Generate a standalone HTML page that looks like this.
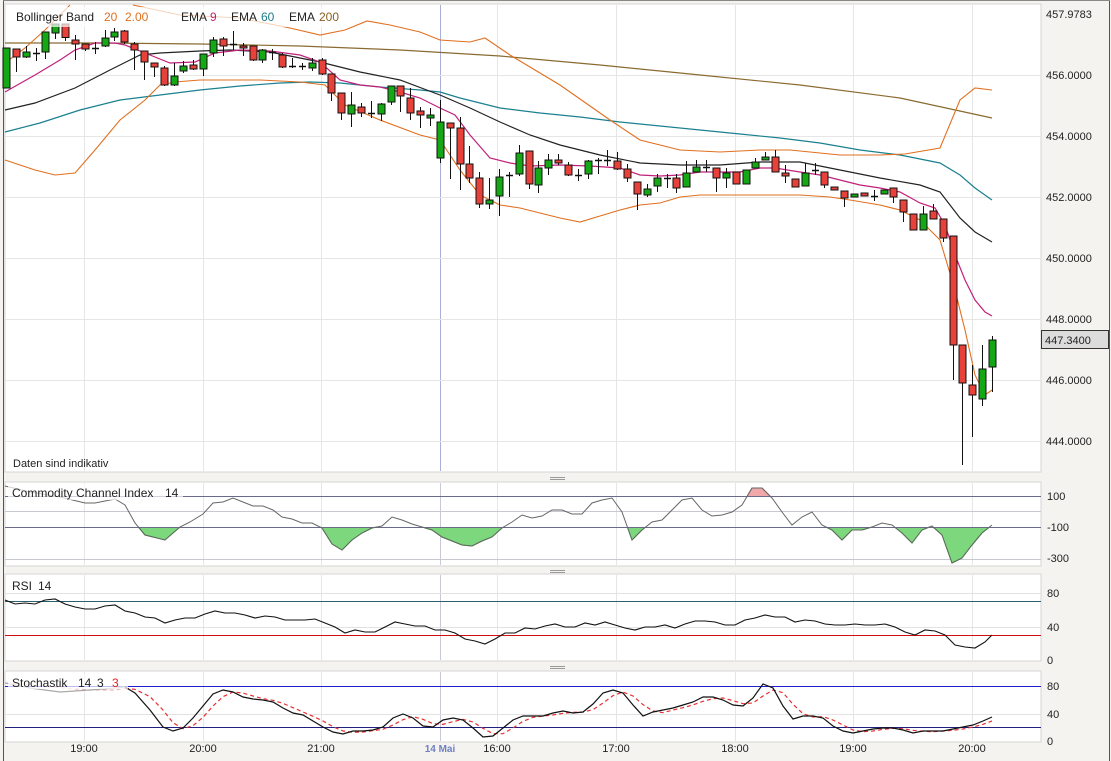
<!DOCTYPE html>
<html><head><meta charset="utf-8"><style>
html,body{margin:0;padding:0;background:#f4f3ef;width:1111px;height:761px;overflow:hidden}
svg{display:block;font-family:"Liberation Sans",Arial,sans-serif}
</style></head><body>
<svg id="s" width="1111" height="761" viewBox="0 0 1111 761" xmlns="http://www.w3.org/2000/svg">
<rect x="0" y="0" width="1111" height="761" fill="#f4f3ef"/>
<line x1="3.5" y1="0" x2="3.5" y2="761" stroke="#555" stroke-width="1"/>
<line x1="1109.5" y1="0" x2="1109.5" y2="761" stroke="#555" stroke-width="1"/>
<line x1="3" y1="0.5" x2="1110" y2="0.5" stroke="#888"/>
<rect x="5" y="4" width="1036" height="468" fill="#fff" stroke="#d6d6d6"/>
<rect x="5" y="482" width="1036" height="84" fill="#fff" stroke="#d6d6d6"/>
<rect x="5" y="574" width="1036" height="87" fill="#fff" stroke="#d6d6d6"/>
<rect x="5" y="671" width="1036" height="71" fill="#fff" stroke="#d6d6d6"/>
<g id="grid"></g>
<g id="main"></g>
<g id="ind"></g>
<g stroke="#999" stroke-width="1">
<line x1="550" y1="477.5" x2="565" y2="477.5"/><line x1="550" y1="479.5" x2="565" y2="479.5"/>
<line x1="550" y1="570.5" x2="565" y2="570.5"/><line x1="550" y1="572.5" x2="565" y2="572.5"/>
<line x1="550" y1="666.5" x2="565" y2="666.5"/><line x1="550" y1="668.5" x2="565" y2="668.5"/>
</g>
<rect x="8" y="7" width="335" height="20" fill="#fff" opacity="0.7"/>
<g font-size="12" fill="#222">
<text x="16" y="21">Bollinger Band</text>
<text x="104" y="21" fill="#e07020">20</text>
<text x="125" y="21" fill="#e07020">2.00</text>
<text x="181" y="21">EMA</text><text x="210" y="21" fill="#c0207a">9</text>
<text x="231" y="21">EMA</text><text x="261" y="21" fill="#1a7a8a">60</text>
<text x="289" y="21">EMA</text><text x="319" y="21" fill="#8a6020">200</text>
</g>
<text x="13" y="467" font-size="11" fill="#222">Daten sind indikativ</text>
<rect x="8" y="484" width="175" height="16" fill="#fff" opacity="0.7"/>
<g font-size="12" fill="#222">
<text x="12" y="497">Commodity Channel Index</text><text x="165" y="497">14</text>
<text x="12" y="590">RSI</text><text x="38" y="590">14</text>
</g>
<rect x="8" y="674" width="120" height="15" fill="#fff" opacity="0.7"/>
<g font-size="12" fill="#222">
<text x="12" y="687">Stochastik</text><text x="78" y="687">14</text><text x="97" y="687">3</text><text x="112" y="687" fill="#e82020">3</text>
</g>
<g font-size="11" fill="#222">
<text x="1046" y="18">457.9783</text>
<text x="1046" y="79">456.0000</text>
<text x="1046" y="140">454.0000</text>
<text x="1046" y="201">452.0000</text>
<text x="1046" y="262">450.0000</text>
<text x="1046" y="323">448.0000</text>
<text x="1046" y="384">446.0000</text>
<text x="1046" y="445">444.0000</text>
<text x="1047" y="500">100</text>
<text x="1047" y="531">-100</text>
<text x="1047" y="562">-300</text>
<text x="1047" y="597">80</text>
<text x="1047" y="631">40</text>
<text x="1047" y="664">0</text>
<text x="1047" y="690">80</text>
<text x="1047" y="718">40</text>
<text x="1047" y="745">0</text>
</g>
<rect x="1041.5" y="330.5" width="67" height="18" fill="#dcdcdc" stroke="#333"/>
<text x="1045" y="344" font-size="11" fill="#222">447.3400</text>
<g font-size="11" fill="#222" text-anchor="middle">
<text x="84" y="752">19:00</text><text x="203" y="752">20:00</text><text x="321" y="752">21:00</text>
<text x="440" y="752" fill="#7080c0" font-weight="bold" font-size="10">14 Mai</text>
<text x="497" y="752">16:00</text><text x="616" y="752">17:00</text><text x="735" y="752">18:00</text>
<text x="853" y="752">19:00</text><text x="972" y="752">20:00</text>
</g>
</svg>
<script>
var NS="http://www.w3.org/2000/svg";
function el(p,t,a){var e=document.createElementNS(NS,t);for(var k in a)e.setAttribute(k,a[k]);document.getElementById(p).appendChild(e);return e;}
function pl(p,pts,st,w,extra){var a={points:pts.map(function(q){return q.join(',')}).join(' '),fill:'none',stroke:st,'stroke-width':w||1};for(var k in extra)a[k]=extra[k];return el(p,'polyline',a);}
var vx=[84,203,321,497,616,735,853,972];
var panels=[[5,471],[483,565],[575,660],[672,741]];
panels.forEach(function(pp){vx.forEach(function(x){el('grid','line',{x1:x+.5,x2:x+.5,y1:pp[0],y2:pp[1],stroke:'#e6e6e6'})});
el('grid','line',{x1:440.5,x2:440.5,y1:pp[0],y2:pp[1],stroke:pp[0]==5?'#a8b0d8':'#c8c8d8'});});
[75,136,197,258,319,380,441].forEach(function(y){el('grid','line',{x1:5,x2:1041,y1:y+.5,y2:y+.5,stroke:'#e6e6e6'})});
[511,559].forEach(function(y){el('grid','line',{x1:5,x2:1041,y1:y+.5,y2:y+.5,stroke:'#c8c8d0'})});
[593,627].forEach(function(y){el('grid','line',{x1:5,x2:1041,y1:y+.5,y2:y+.5,stroke:'#e2e2e2'})});
[714].forEach(function(y){el('grid','line',{x1:5,x2:1041,y1:y+.5,y2:y+.5,stroke:'#e2e2e2'})});
pl('main',[[5,43],[100,43],[200,44],[300,46],[400,50],[500,56],[600,65],[700,75],[800,85],[900,98],[992,118]],'#8a6a30',1.2);
pl('main',[[5,132],[40,123],[80,110],[120,100],[160,95],[200,90],[240,86],[280,83],[310,82],[340,83],[380,87],[420,90],[440,92],[460,98],[500,108],[540,113],[580,117],[620,122],[660,126],[700,130],[740,134],[780,138],[820,143],[860,150],[900,155],[940,163],[960,175],[975,188],[992,200]],'#1a8090',1.2);
pl('main',[[5,110],[35,103],[75,88],[110,70],[140,55],[160,53],[200,51],[230,50],[270,52],[320,62],[360,72],[400,80],[440,95],[470,108],[500,122],[530,135],[560,145],[600,155],[640,163],[680,165],[720,165],[760,162],[800,162],[840,170],[880,178],[920,185],[940,192],[960,218],[975,232],[992,242]],'#222',1.2);
pl('main',[[5,63],[25,48],[45,30],[70,5]],'#e07020',1.1);
pl('main',[[133,5],[180,15],[240,18],[290,28],[320,35],[345,30],[367,21],[390,25],[420,32],[440,40],[470,42],[485,38],[510,55],[560,85],[610,120],[640,140],[680,150],[720,152],[760,150],[790,150],[840,155],[880,155],[905,154],[940,148],[960,100],[975,88],[992,90]],'#e07020',1.1);
pl('main',[[5,160],[35,170],[55,175],[75,173],[95,150],[120,120],[145,100],[160,85],[175,82],[200,80],[260,80],[300,82],[325,85],[345,105],[380,120],[420,135],[440,140],[460,170],[480,195],[500,205],[520,208],[560,218],[580,222],[600,216],[620,210],[640,205],[660,203],[680,197],[700,195],[740,195],[800,195],[830,197],[850,200],[880,205],[900,210],[920,220],[940,240],[955,290],[965,330],[975,375],[985,395],[992,390]],'#e07020',1.1);
pl('main',[[5,92],[35,75],[60,60],[75,50],[95,43],[115,43],[125,45],[150,55],[170,63],[195,62],[215,53],[240,50],[270,51],[300,55],[320,62],[340,80],[360,85],[380,87],[400,92],[420,98],[440,108],[455,115],[470,135],[490,158],[510,163],[530,166],[560,165],[590,166],[620,168],[640,175],[660,176],[680,175],[700,172],[740,172],[760,168],[775,168],[800,172],[820,175],[840,180],[860,185],[880,188],[900,192],[920,203],[935,208],[945,225],[955,255],[965,280],[975,300],[985,312],[992,316]],'#c0207a',1.2);
var C=[[88,48,48,88],[49,57,49,72],[57,52,46,58],[53,53,48,61],[52,32,32,59],[33,24,24,39],[24,37.5,24,41],[40,44,35,60],[44,49,44,51],[48,48,42,54],[46,38,30,47],[37,32,28,41],[31,42,30,44],[44,50,42,70],[51,62,51,80],[63,67,63,77],[68,85,66,86],[85,76,63,86],[71,66,61,73],[65,69,60,70],[69,54,54,76],[53,40,37,57],[39,46,37,56],[44,44,31,50],[46,48,43,56],[46,60,46,61],[60,50,49,63],[52,52,49,60],[55,67,53,68],[66,66,58,68],[66,66,63,70],[68,63,58,71],[60,74,58,75],[74,93,74,101],[93,113,93,120],[114,105,92,127],[107,113,103,117],[113,113,101,118],[114,104,103,121],[102,86,86,105],[86,96,86,112],[98,113,88,120],[111,115,107,128],[118,115,108,126],[158,122,100,163],[123,128,123,179],[128,164,117,190],[164,178,146,183],[178,204,172,208],[204,200,178,209],[196,177,169,216],[175,175,172,197],[174,153,145,176],[151,184,151,189],[185,168,161,193],[168,160,154,175],[160,163,154,165],[165,175,162,176],[175,175,169,181],[174,161,160,179],[160,160,158,174],[160,160,150,166],[161,169,152,170],[169,178,164,182],[182,194,182,210],[195,189,184,197],[186,178,174,192],[178,178,174,188],[178,188,174,193],[187,173,161,187],[172,167,160,172],[167,167,160,172],[168,178,168,192],[178,173,168,188],[172,184,172,184],[184,170,170,184],[168,162,158,168],[160,157,152,160],[157,172,150,172],[173,176,165,183],[179,187,179,187],[186,173,163,186],[170,170,163,175],[172,185,172,188],[187,190,187,190],[191,198,191,207],[197,194,194,197],[193,196,193,196],[196,196,190,201],[194,190,190,194],[188,197,188,203],[200,212,200,222],[214,230,214,230],[230,214,206,230],[211,219,204,219],[219,238,219,242],[236,345,236,380],[345,383,345,465],[385,395,365,437],[399,369,345,406],[367,340,336,392]];
C.forEach(function(c,i){var x=Math.round(6+i*9.86)+.5;
el('main','line',{x1:x,x2:x,y1:c[2],y2:c[3],stroke:'#111'});
if(Math.abs(c[0]-c[1])<1){el('main','line',{x1:x-3.5,x2:x+3.5,y1:c[0]+.5,y2:c[0]+.5,stroke:'#111','stroke-width':1.5});}
else{var g=c[1]<c[0];el('main','rect',{x:x-3.5,y:Math.min(c[0],c[1]),width:7,height:Math.abs(c[0]-c[1]),fill:g?'#14a814':'#e8413a',stroke:'#111'});}});
var cci=[[5,486],[30,492],[60,497],[85,503],[95,503],[115,499],[125,505],[135,523],[145,535],[165,540],[180,527],[190,522],[203,514],[213,503],[223,502],[233,498],[243,502],[253,506],[263,506],[273,510],[282,517],[292,519],[302,523],[312,523],[322,528],[332,544],[342,550],[352,540],[362,533],[372,528],[382,526],[392,517],[402,520],[412,524],[422,527],[432,530],[442,537],[452,541],[462,545],[472,546],[482,541],[492,537],[502,528],[512,522],[522,515],[532,518],[542,516],[552,510],[562,510],[572,514],[582,514],[592,503],[602,500],[612,498],[622,512],[632,540],[642,530],[652,522],[662,520],[672,510],[682,500],[692,498],[702,510],[712,516],[722,515],[732,512],[742,505],[752,488],[762,488],[772,498],[782,512],[792,525],[802,517],[812,512],[822,525],[832,530],[842,540],[852,530],[862,530],[872,527],[882,523],[892,525],[902,533],[912,543],[922,530],[932,526],[942,535],[952,563],[962,558],[972,545],[982,533],[992,525]];
function clipFill(pts,lvl,below,fill,stroke){var seg=[];
function flush(){if(seg.length>1){var s='M'+seg[0][0]+','+lvl;seg.forEach(function(p){s+=' L'+p[0]+','+p[1]});s+=' L'+seg[seg.length-1][0]+','+lvl+' Z';el('ind','path',{d:s,fill:fill,stroke:'none'});pl('ind',seg,stroke,1);}seg=[];}
for(var i=0;i<pts.length;i++){var p=pts[i],inn=below?p[1]>lvl:p[1]<lvl;
if(i>0){var q=pts[i-1],qin=below?q[1]>lvl:q[1]<lvl;if(inn!=qin){var t=(lvl-q[1])/(p[1]-q[1]);var xc=q[0]+t*(p[0]-q[0]);seg.push([xc,lvl]);if(!inn)flush();}}
if(inn)seg.push(p);}
flush();}
clipFill(cci,527,true,'#7dd87d','#22b022');
clipFill(cci.slice(2),496,false,'#f0a8a8','#e06060');
el('ind','line',{x1:5,x2:1041,y1:496.5,y2:496.5,stroke:'#6a6a8a'});
el('ind','line',{x1:5,x2:1041,y1:527.5,y2:527.5,stroke:'#6a6a8a'});
pl('ind',cci,'#666',1);
el('ind','line',{x1:5,x2:1041,y1:601.5,y2:601.5,stroke:'#2a6070'});
el('ind','line',{x1:5,x2:1041,y1:635.5,y2:635.5,stroke:'#d01010'});
var rsi=[600,604,603,604,600,599,604,607,609,609,606,605,611,613,617,618,623,620,618,618,614,611,613,613,615,618,616,617,620,620,620,619,623,627,633,630,632,632,627,622,624,626,626,630,630,633,639,641,644,639,633,633,628,629,626,624,627,627,623,625,622,625,628,630,627,627,625,628,624,621,621,622,625,625,620,618,615,617,617,622,620,621,624,625,625,624,625,625,624,627,632,635,630,631,635,645,647,648,642,635];
pl('ind',rsi.map(function(y,i){return [i==rsi.length-1?992:5+i*10,y]}),'#111',1.1);
el('ind','line',{x1:5,x2:1041,y1:686.5,y2:686.5,stroke:'#2020d0'});
el('ind','line',{x1:5,x2:1041,y1:727.5,y2:727.5,stroke:'#202080'});
var K=[[5,683],[30,688],[60,692],[90,690],[115,688],[125,687],[135,693],[150,710],[163,727],[173,731],[183,728],[193,718],[203,706],[213,694],[223,690],[233,692],[243,697],[253,699],[263,700],[273,702],[283,708],[293,713],[303,715],[313,721],[323,727],[333,732],[343,734],[353,731],[363,731],[373,730],[383,727],[393,718],[403,714],[413,718],[423,726],[433,727],[443,720],[453,718],[463,720],[473,728],[483,737],[493,736],[503,728],[513,720],[523,716],[533,716],[543,716],[553,713],[563,711],[573,713],[583,712],[593,704],[603,693],[613,690],[623,693],[633,705],[643,716],[653,712],[663,710],[673,708],[683,705],[693,702],[703,697],[713,697],[723,700],[733,705],[743,706],[753,698],[763,684],[773,688],[783,706],[793,719],[803,716],[813,716],[823,718],[833,726],[843,731],[853,733],[863,731],[873,729],[883,728],[893,728],[903,730],[913,733],[923,731],[933,731],[943,731],[953,729],[963,727],[973,725],[983,721],[992,717]];
var D=K.map(function(p,i){var a=K[Math.max(0,i-1)][1],b=K[Math.max(0,i-2)][1];return [p[0],(p[1]+a+b)/3];});
var split=5;
pl('ind',D.slice(0,split+1),'#f0b0b0',1.2,{'stroke-dasharray':'4,3'});
pl('ind',D.slice(split),'#e83030',1.2,{'stroke-dasharray':'4,3'});
pl('ind',K.slice(0,split+1),'#aaa',1.2);
pl('ind',K.slice(split),'#111',1.2);
</script>
</body></html>
